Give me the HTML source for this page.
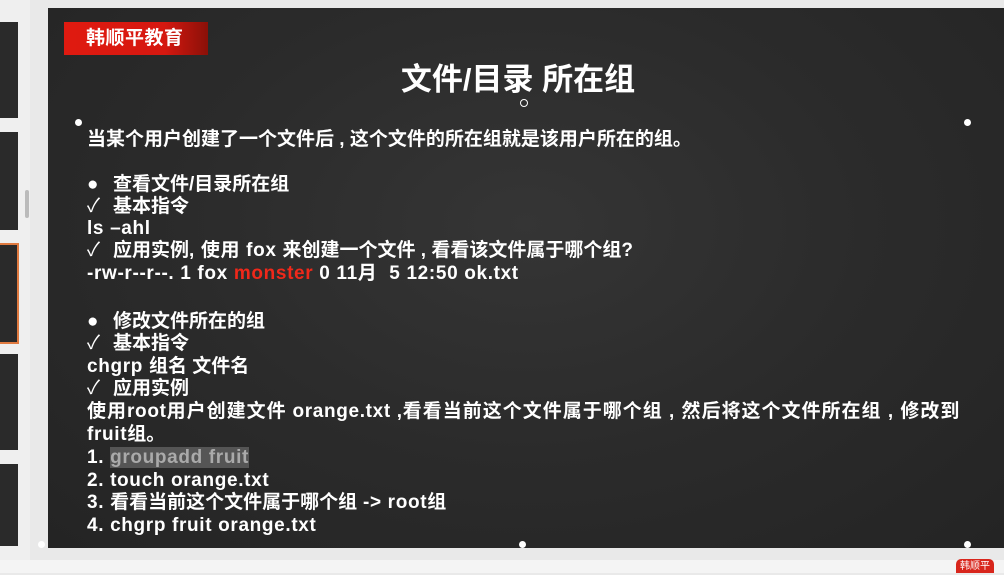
<!DOCTYPE html>
<html><head><meta charset="utf-8"><style>
html,body{margin:0;padding:0;}
body{width:1004px;height:573px;position:relative;overflow:hidden;background:#e9e9e9;font-family:"Liberation Sans","Noto Sans CJK SC",sans-serif;}
.side{position:absolute;left:0;top:0;width:30px;height:573px;background:#efefef;}
.th{position:absolute;left:0;width:18px;background:#2a2a2a;}
.slide{position:absolute;left:48px;top:8px;width:956px;height:540px;background:radial-gradient(ellipse at 50% 40%,#353535 0%,#2b2b2b 50%,#242424 100%);}
.logo{position:absolute;left:64px;top:22px;width:144px;height:33px;background:linear-gradient(90deg,#e01a10 0%,#d51810 70%,#8a1008 100%);color:#fff;font-weight:bold;font-size:19px;line-height:33px;padding-left:22px;box-sizing:border-box;letter-spacing:0.5px;}
.title{position:absolute;left:0;width:1036px;text-align:center;top:61px;color:#fff;font-weight:bold;font-size:31px;line-height:38px;}
.l{position:absolute;left:87px;color:#fff;font-weight:bold;font-size:19px;line-height:22px;white-space:nowrap;}
.e{letter-spacing:0.65px;}
.ck{font-weight:normal;display:inline-block;width:26px;letter-spacing:0;}
.bu{display:inline-block;width:26px;}
.dot{position:absolute;width:7px;height:7px;border-radius:50%;background:#fff;}
.red{color:#f0281a;}
.hl{background:#555;color:#aaa;}
</style></head><body>
<div class="side"></div>
<div class="th" style="top:22px;height:96px"></div>
<div class="th" style="top:132px;height:98px"></div>
<div class="th" style="top:243px;height:97px;border:2px solid #e07a40;border-left:none;width:17px"></div>
<div class="th" style="top:354px;height:96px"></div>
<div class="th" style="top:464px;height:82px"></div>
<div style="position:absolute;left:25px;top:190px;width:4px;height:28px;background:#bbb;border-radius:2px"></div>
<div class="slide"></div>
<div class="logo">韩顺平教育</div>
<div class="title">文件/目录 所在组</div>
<div class="dot" style="left:520px;top:99px;width:6px;height:6px;background:none;border:1.5px solid #fff"></div>
<div class="dot" style="left:75px;top:119px"></div>
<div class="dot" style="left:964px;top:119px"></div>
<div class="dot" style="left:38px;top:541px"></div>
<div class="dot" style="left:519px;top:541px"></div>
<div class="dot" style="left:964px;top:541px"></div>
<div class="l" style="top:129px">当某个用户创建了一个文件后 , 这个文件的所在组就是该用户所在的组。</div>
<div class="l" style="top:174px"><span class="bu">●</span>查看文件/目录所在组</div>
<div class="l" style="top:196px"><span class="ck">✓</span>基本指令</div>
<div class="l e" style="top:218px">ls –ahl</div>
<div class="l" style="top:240px"><span class="ck">✓</span>应用实例<span class="e">, 使用 fox </span>来创建一个文件 , 看看该文件属于哪个组?</div>
<div class="l e" style="top:263px">-rw-r--r--. 1 fox <span class="red">monster</span> 0 11月&nbsp; 5 12:50 ok.txt</div>
<div class="l" style="top:311px"><span class="bu">●</span>修改文件所在的组</div>
<div class="l" style="top:333px"><span class="ck">✓</span>基本指令</div>
<div class="l" style="top:356px"><span class="e">chgrp </span>组名 文件名</div>
<div class="l" style="top:378px"><span class="ck">✓</span>应用实例</div>
<div class="l" style="top:401px;letter-spacing:1px">使用<span class="e">root</span>用户创建文件<span class="e"> orange.txt ,</span>看看当前这个文件属于哪个组 , 然后将这个文件所在组 , 修改到</div>
<div class="l" style="top:424px"><span class="e">fruit</span>组。</div>
<div class="l e" style="top:447px">1. <span class="hl">groupadd fruit</span></div>
<div class="l e" style="top:470px">2. touch orange.txt</div>
<div class="l" style="top:492px"><span class="e">3. </span>看看当前这个文件属于哪个组<span class="e"> -&gt; root</span>组</div>
<div class="l e" style="top:515px">4. chgrp fruit orange.txt</div>
<div style="position:absolute;left:0;top:560px;width:1004px;height:13px;background:#f4f4f4"></div>
<div style="position:absolute;left:956px;top:559px;width:38px;height:14px;background:#d8261c;border-radius:5px 5px 0 0;color:#fff;font-size:10px;line-height:16px;text-align:center">韩顺平</div>
</body></html>
